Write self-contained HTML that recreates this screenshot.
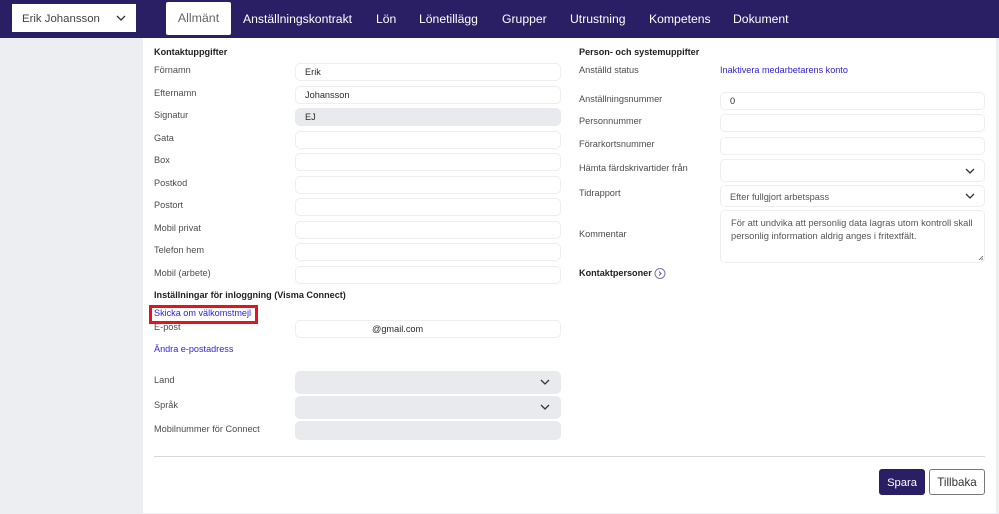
<!DOCTYPE html>
<html lang="sv"><head><meta charset="utf-8"><title>Allmänt</title>
<style>
html,body{margin:0;padding:0}
body{position:relative;width:999px;height:514px;overflow:hidden;background:#eceef2;font-family:"Liberation Sans",sans-serif;color:#555}
div,a,svg{position:absolute;box-sizing:border-box;white-space:nowrap}
.n{color:#fff;font-size:12.2px;top:11px;line-height:16px}
.l{font-size:9.2px;line-height:12px;color:#4c4c4c;left:154px}
.r{left:579px}
.h{font-size:9.1px;font-weight:bold;line-height:12px;color:#222}
.f{left:295px;width:266px;height:18px;border:1px solid #eceef0;border-radius:5px;background:#fff;font-size:9.2px;line-height:17px;padding-left:9px;color:#2b2b2b}
.g{left:720px;width:265px}
.d{background:#e8eaed;border-color:#e8eaed}
.a{color:#2b1fe0;font-size:9.1px;line-height:12px;text-decoration:none}
.c{width:10px;height:6px;fill:none;stroke:#333;stroke-width:1.3}
</style></head><body>
<div style="left:0;top:0;width:999px;height:38px;background:#2a1e64"></div>
<div style="left:12px;top:4px;width:124px;height:28px;background:#fff;font-size:11.4px;line-height:31px;padding-left:10px;color:#444">Erik Johansson</div>
<svg class="c" style="left:116px;top:15px" viewBox="0 0 10 6"><path d="M1 1l4 4 4-4"/></svg>
<div style="left:166px;top:2px;width:65px;height:33px;background:#fff;border-radius:2px;font-size:12.4px;line-height:32px;text-align:center;color:#666">Allmänt</div>
<div class="n" style="left:243px">Anställningskontrakt</div>
<div class="n" style="left:376px">Lön</div>
<div class="n" style="left:419px">Lönetillägg</div>
<div class="n" style="left:502px">Grupper</div>
<div class="n" style="left:570px">Utrustning</div>
<div class="n" style="left:649px">Kompetens</div>
<div class="n" style="left:733px">Dokument</div>

<div style="left:143px;top:38px;width:853px;height:475px;background:#fff"></div>

<div class="h" style="left:154px;top:46px">Kontaktuppgifter</div>
<div class="l" style="top:64px">Förnamn</div><div class="f" style="top:63px">Erik</div>
<div class="l" style="top:87px">Efternamn</div><div class="f" style="top:86px">Johansson</div>
<div class="l" style="top:109px">Signatur</div><div class="f d" style="top:108px">EJ</div>
<div class="l" style="top:132px">Gata</div><div class="f" style="top:131px"></div>
<div class="l" style="top:154px">Box</div><div class="f" style="top:153px"></div>
<div class="l" style="top:177px">Postkod</div><div class="f" style="top:176px"></div>
<div class="l" style="top:199px">Postort</div><div class="f" style="top:198px"></div>
<div class="l" style="top:222px">Mobil privat</div><div class="f" style="top:221px"></div>
<div class="l" style="top:244px">Telefon hem</div><div class="f" style="top:243px"></div>
<div class="l" style="top:267px">Mobil (arbete)</div><div class="f" style="top:266px"></div>

<div class="h" style="left:154px;top:289px">Inställningar för inloggning (Visma Connect)</div>
<div class="l" style="top:321px">E-post</div>
<div style="left:149px;top:305px;width:109px;height:19px;border:3px solid #e8131a"></div>
<a class="a" style="left:154px;top:307px">Skicka om välkomstmejl</a>
<div class="f" style="top:320px;padding-left:76px">@gmail.com</div>
<a class="a" style="left:154px;top:343px">Ändra e-postadress</a>

<div class="l" style="top:374px">Land</div><div class="f d" style="top:371px;height:23px"></div>
<svg class="c" style="left:540px;top:379px" viewBox="0 0 10 6"><path d="M1 1l4 4 4-4"/></svg>
<div class="l" style="top:399px">Språk</div><div class="f d" style="top:396px;height:23px"></div>
<svg class="c" style="left:540px;top:404px" viewBox="0 0 10 6"><path d="M1 1l4 4 4-4"/></svg>
<div class="l" style="top:423px">Mobilnummer för Connect</div><div class="f d" style="top:421px;height:19px"></div>

<div class="h r" style="top:46px">Person- och systemuppifter</div>
<div class="l r" style="top:64px">Anställd status</div>
<a class="a" style="left:720px;top:64px">Inaktivera medarbetarens konto</a>
<div class="l r" style="top:93px">Anställningsnummer</div><div class="f g" style="top:92px">0</div>
<div class="l r" style="top:115px">Personnummer</div><div class="f g" style="top:114px"></div>
<div class="l r" style="top:138px">Förarkortsnummer</div><div class="f g" style="top:137px"></div>
<div class="l r" style="top:162px">Hämta färdskrivartider från</div><div class="f g" style="top:159px;height:23px"></div>
<svg class="c" style="left:965px;top:168px" viewBox="0 0 10 6"><path d="M1 1l4 4 4-4"/></svg>
<div class="l r" style="top:187px">Tidrapport</div><div class="f g" style="top:185px;height:22px;line-height:22px;color:#555">Efter fullgjort arbetspass</div>
<svg class="c" style="left:965px;top:193px" viewBox="0 0 10 6"><path d="M1 1l4 4 4-4"/></svg>
<div class="l r" style="top:228px">Kommentar</div>
<div class="f g" style="top:210px;height:53px;line-height:13px;padding-top:6px;padding-left:10px;font-size:9.35px;color:#555">För att undvika att personlig data lagras utom kontroll skall<br>personlig information aldrig anges i fritextfält.</div>
<svg style="left:978px;top:255px;width:6px;height:6px" viewBox="0 0 6 6"><path d="M1 5l4-4M3.5 5l1.5-1.5" stroke="#555" stroke-width=".8" fill="none"/></svg>
<div class="h r" style="top:267px">Kontaktpersoner</div>
<svg style="left:654px;top:267px;width:12px;height:12px" viewBox="0 0 12 12"><circle cx="6" cy="6.5" r="5" fill="none" stroke="#7a70a8" stroke-width="1"/><path d="M5 4.5l2 2-2 2" fill="none" stroke="#5a4f90" stroke-width="1"/></svg>

<div style="left:154px;top:456px;width:831px;height:1px;background:#d8d9dc"></div>
<div style="left:879px;top:469px;width:46px;height:26px;background:#2a1e64;border-radius:3px;color:#fff;font-size:11.2px;line-height:28px;text-align:center">Spara</div>
<div style="left:929px;top:469px;width:56px;height:26px;background:#fff;border:1px solid #777;border-radius:3px;color:#333;font-size:11.6px;line-height:25px;text-align:center">Tillbaka</div>
</body></html>
